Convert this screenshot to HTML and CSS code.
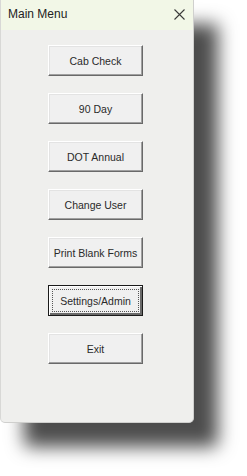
FILE: index.html
```html
<!DOCTYPE html>
<html lang="en">
<head>
    <meta charset="UTF-8">
    <meta name="viewport" content="width=device-width, initial-scale=1.0">
    <title>Main Menu</title>
    <link rel="stylesheet" href="styles.css">
</head>
<body>
    <div class="window">
        <div class="title-bar">
            <span class="title">Main Menu</span>
            <svg class="close" width="11" height="11" viewBox="0 0 11 11">
                <path d="M0.5 0.5 L10.5 10.5 M10.5 0.5 L0.5 10.5" stroke="#3a3a3a" stroke-width="1.1" fill="none"/>
            </svg>
        </div>
        <div class="menu">
            <button class="btn">Cab Check</button>
            <button class="btn">90 Day</button>
            <button class="btn">DOT Annual</button>
            <button class="btn">Change User</button>
            <button class="btn">Print Blank Forms</button>
            <button class="btn focused"><span class="focus-ring">Settings/Admin</span></button>
            <button class="btn">Exit</button>
        </div>
    </div>
</body>
</html>
```

FILE: styles.css
```css
* {
    margin: 0;
    padding: 0;
    box-sizing: border-box;
    font-family: 'Liberation Sans', Arial, sans-serif;
}

body {
    background: #ffffff;
    width: 247px;
    height: 476px;
    overflow: hidden;
}

.window {
    width: 194px;
    height: 423px;
    background: #efefed;
    border-left: 1px solid #d8d8d6;
    border-bottom: 1px solid #cfcfcd;
    border-right: 1px solid #d0d0ce;
    border-radius: 0 0 5px 5px;
    box-shadow: 24px 24px 18px rgba(0, 0, 0, 0.7);
    display: flex;
    flex-direction: column;
}

.title-bar {
    height: 30px;
    background: #f2f7e7;
    display: flex;
    align-items: center;
    justify-content: space-between;
    padding: 0 8px 2px 7px;
}

.title {
    font-size: 12px;
    color: #222;
}

.close {
    margin-top: 1px;
}

.menu {
    display: flex;
    flex-direction: column;
    gap: 17px;
    padding: 15px 0 0 47px;
}

.btn {
    width: 95px;
    height: 31px;
    background: #f0f0f0;
    border: 1px solid;
    border-color: #ffffff #696969 #696969 #ffffff;
    box-shadow: inset -1px -1px 0 #a0a0a0, inset 1px 1px 0 #e3e3e3;
    font-size: 10.5px;
    color: #2a2a2a;
    display: flex;
    align-items: center;
    justify-content: center;
}

.btn.focused {
    border: 1px solid #1a1a1a;
    box-shadow: inset 1px 1px 0 #ffffff, inset -2px -2px 0 #696969;
    padding: 3px;
}

.focus-ring {
    width: 100%;
    height: 100%;
    border: 1px dotted #555;
    display: flex;
    align-items: center;
    justify-content: center;
}
```
